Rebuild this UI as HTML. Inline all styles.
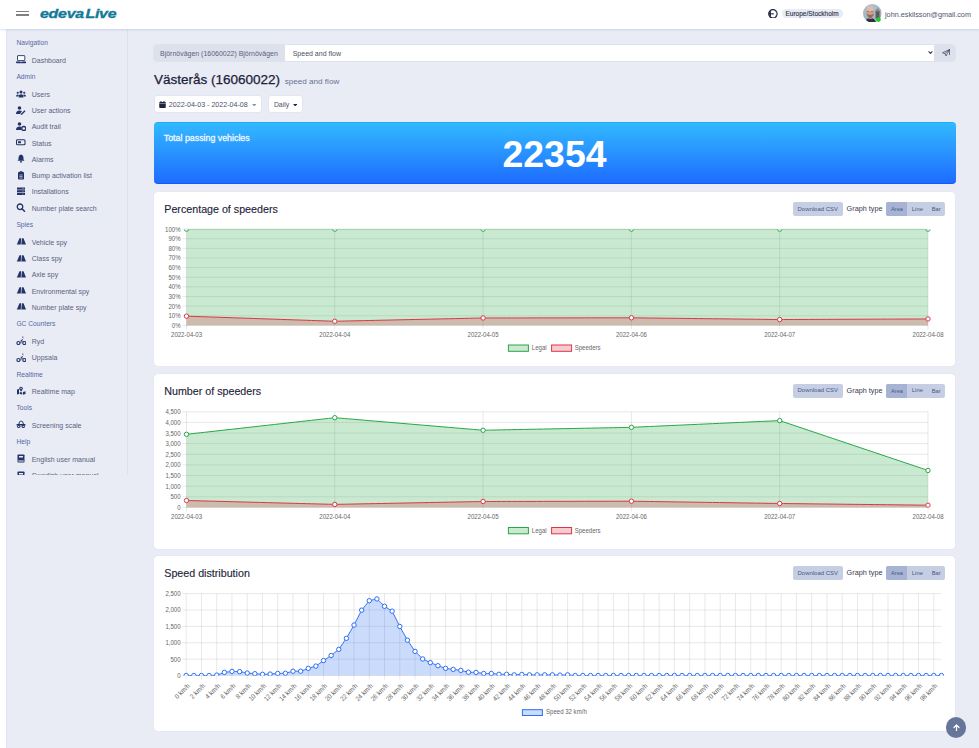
<!DOCTYPE html><html><head><meta charset="utf-8"><style>
*{box-sizing:border-box;margin:0;padding:0}
html,body{width:979px;height:748px;overflow:hidden;background:#e9ecf5;font-family:"Liberation Sans", sans-serif}
.t{position:absolute;white-space:nowrap;line-height:1}
.a{position:absolute}
.card{position:absolute;background:#fff;border-radius:4px;box-shadow:0 0 1px rgba(120,130,170,.25)}
</style></head><body>
<div class="a" style="left:0;top:0;width:979px;height:29px;background:#fff;box-shadow:0 1px 2px rgba(130,150,210,.3);z-index:5"></div>
<div class="a" style="left:0;top:29px;width:6px;height:719px;background:#fff;z-index:4;box-shadow:0.5px 0 1px rgba(190,195,210,.25)"></div>
<div class="a" style="z-index:6;left:16px;top:10.9px;width:13px;height:1.3px;background:#808080"></div>
<div class="a" style="z-index:6;left:16px;top:14.4px;width:13px;height:1.3px;background:#808080"></div>
<div class="t" style="z-index:6;left:39.50px;top:6.86px;font-size:13.4px;color:#137a98;font-weight:bold;font-style:italic;letter-spacing:-0.2px;transform:scaleX(1.19);transform-origin:0 0;-webkit-text-stroke:0.35px #137a98">edeva<span style="margin-left:1.2px">Live</span></div>

<svg class="a" style="z-index:6;left:768px;top:8.5px" width="9.8" height="9.6" viewBox="0 0 20 20"><circle cx="10" cy="10" r="8.8" fill="none" stroke="#1b2035" stroke-width="2.4"/><path d="M2 10 Q2 4 6 3 Q4.5 6 6 8 Q7 9 5 10 Q7 11 6 13 Q4.5 15 6 17 Q2 15 2 10Z" fill="#1b2035"/><path d="M4 10 H10.5" stroke="#1b2035" stroke-width="2"/><circle cx="10.5" cy="10" r="1.4" fill="#1b2035"/><circle cx="16.5" cy="15" r="1.3" fill="#1b2035"/><circle cx="16" cy="5.5" r="1" fill="#1b2035"/></svg>
<div class="a" style="z-index:6;left:781.5px;top:9px;width:61.5px;height:9px;border-radius:5px;background:#e8ebf4"></div>
<div class="t" style="z-index:6;left:785.50px;top:11.00px;font-size:6.5px;color:#262b3f;font-weight:normal;-webkit-text-stroke:0.1px #262b3f">Europe/Stockholm</div>

<svg class="a" style="z-index:6;left:863.2px;top:3.9px" width="18.6" height="18.6" viewBox="0 0 37 37">
<defs><clipPath id="av"><circle cx="18.5" cy="18.5" r="18.5"/></clipPath><radialGradient id="bgav" cx="0.4" cy="0.3" r="0.8"><stop offset="0" stop-color="#b7c9d6"/><stop offset="1" stop-color="#8ea7ba"/></radialGradient></defs>
<g clip-path="url(#av)">
<rect width="37" height="37" fill="url(#bgav)"/>
<rect x="25" y="13" width="8" height="16" fill="#5e5a58"/>
<rect x="27" y="9" width="4" height="6" fill="#7c8a93"/>
<path d="M4 37 Q6 28 14.5 28 Q23 28 26 37Z" fill="#2d2f3a"/>
<rect x="11" y="24" width="7" height="6" fill="#a87f6c"/>
<ellipse cx="14.5" cy="15" rx="8.2" ry="11.5" fill="#caa08c"/>
<ellipse cx="14.5" cy="9.5" rx="7" ry="6" fill="#ddbcad"/>
<path d="M7 19 Q9 27 14.5 27 Q20 27 22 19 Q18 22 14.5 22 Q11 22 7 19Z" fill="#8d6b5c"/>
<rect x="9" y="14" width="3.5" height="1.2" fill="#6e5148"/><rect x="16" y="14" width="3.5" height="1.2" fill="#6e5148"/>
</g>
<circle cx="30.8" cy="31" r="4.6" fill="#1fc92f"/>
</svg>
<div class="t" style="z-index:6;left:885.00px;top:10.75px;font-size:7.26px;color:#50566c;font-weight:normal;">john.eskilsson@gmail.com</div>

<div class="a" style="left:127px;top:29px;width:1px;height:445.5px;background:#dde1ec"></div>
<div class="a" style="left:0;top:29px;width:127px;height:445.5px;overflow:hidden"><div class="a" style="left:0;top:-29px;width:127px;height:520px"><div class="t" style="left:16.40px;top:40.23px;font-size:6.7px;color:#5568a3;font-weight:normal;">Navigation</div>
<svg class="a" style="left:16px;top:55.40px" width="10" height="9" viewBox="0 0 20 18"><rect x="3" y="1.2" width="14.6" height="10" rx="0.8" fill="#fff" stroke="#243468" stroke-width="1.8"/><path d="M0 12.8 H20.6 V15 Q20.6 16.4 19 16.4 H1.6 Q0 16.4 0 15Z" fill="#243468"/><rect x="8" y="13" width="4.6" height="1.2" fill="#dfe6f5"/></svg>
<div class="t" style="left:31.70px;top:56.87px;font-size:7.0px;color:#5a6283;font-weight:normal;">Dashboard</div>
<div class="t" style="left:16.40px;top:74.23px;font-size:6.7px;color:#5568a3;font-weight:normal;">Admin</div>
<svg class="a" style="left:16px;top:89.50px" width="10" height="9" viewBox="0 0 20 18"><circle cx="10" cy="4" r="3" fill="#243468"/><circle cx="3.5" cy="5.5" r="2.2" fill="#243468"/><circle cx="16.5" cy="5.5" r="2.2" fill="#243468"/><path d="M5 15 Q5 8.5 10 8.5 Q15 8.5 15 15Z" fill="#243468"/><path d="M0 13 Q0 9 3.5 9 Q5 9 6 10 Q4 12 4 13Z M20 13 Q20 9 16.5 9 Q15 9 14 10 Q16 12 16 13Z" fill="#243468"/></svg>
<div class="t" style="left:31.70px;top:90.97px;font-size:7.0px;color:#5a6283;font-weight:normal;">Users</div>
<svg class="a" style="left:16px;top:105.70px" width="10" height="9" viewBox="0 0 20 18"><circle cx="7" cy="4" r="3.6" fill="#243468"/><path d="M0 16 Q0 9 7 9 Q10 9 12 10 L8 16Z" fill="#243468"/><path d="M10 15.5 L17 8.5 L19 10.5 L12 17.5 L9.5 17.8Z" fill="#243468"/></svg>
<div class="t" style="left:31.70px;top:107.17px;font-size:7.0px;color:#5a6283;font-weight:normal;">User actions</div>
<svg class="a" style="left:16px;top:122.00px" width="10" height="9" viewBox="0 0 20 18"><circle cx="7" cy="4" r="3.6" fill="#243468"/><path d="M0 16 Q0 9 7 9 Q10 9 11 10 L11 16Z" fill="#243468"/><circle cx="15.5" cy="13" r="4" fill="none" stroke="#243468" stroke-width="2.6"/></svg>
<div class="t" style="left:31.70px;top:123.47px;font-size:7.0px;color:#5a6283;font-weight:normal;">Audit trail</div>
<svg class="a" style="left:16px;top:138.10px" width="10" height="9" viewBox="0 0 20 18"><rect x="1" y="3.5" width="17" height="10" rx="2" fill="none" stroke="#243468" stroke-width="2.2"/><rect x="4" y="6.5" width="6" height="4" fill="#243468"/></svg>
<div class="t" style="left:31.70px;top:139.57px;font-size:7.0px;color:#5a6283;font-weight:normal;">Status</div>
<svg class="a" style="left:16px;top:154.40px" width="10" height="9" viewBox="0 0 20 18"><path d="M10 1 Q15 2 15 8 L15 11 L17 13.5 H3 L5 11 L5 8 Q5 2 10 1Z" fill="#243468"/><circle cx="10" cy="15.5" r="1.8" fill="#243468"/></svg>
<div class="t" style="left:31.70px;top:155.87px;font-size:7.0px;color:#5a6283;font-weight:normal;">Alarms</div>
<svg class="a" style="left:16px;top:170.80px" width="10" height="9" viewBox="0 0 20 18"><rect x="4" y="2" width="12" height="15" rx="1.5" fill="#243468"/><rect x="7" y="0.5" width="6" height="3" rx="1" fill="#243468"/><path d="M7 8 H13 M7 11 H13 M7 14 H13" stroke="#e9ecf5" stroke-width="1.3"/></svg>
<div class="t" style="left:31.70px;top:172.27px;font-size:7.0px;color:#5a6283;font-weight:normal;">Bump activation list</div>
<svg class="a" style="left:16px;top:186.90px" width="10" height="9" viewBox="0 0 20 18"><rect x="2" y="1" width="16" height="4.2" fill="#243468"/><rect x="2" y="6.4" width="16" height="4.2" fill="#243468"/><rect x="2" y="11.8" width="16" height="4.2" fill="#243468"/><path d="M14 2.2 V4 M14 7.6 V9.4 M14 13 V14.8" stroke="#e9ecf5" stroke-width="1.2"/></svg>
<div class="t" style="left:31.70px;top:188.37px;font-size:7.0px;color:#5a6283;font-weight:normal;">Installations</div>
<svg class="a" style="left:16px;top:203.20px" width="10" height="9" viewBox="0 0 20 18"><circle cx="8" cy="7.5" r="5.5" fill="none" stroke="#243468" stroke-width="2.6"/><path d="M12 11.5 L17 16.5" stroke="#243468" stroke-width="3" stroke-linecap="round"/></svg>
<div class="t" style="left:31.70px;top:204.67px;font-size:7.0px;color:#5a6283;font-weight:normal;">Number plate search</div>
<div class="t" style="left:16.40px;top:222.23px;font-size:6.7px;color:#5568a3;font-weight:normal;">Spies</div>
<svg class="a" style="left:16px;top:237.40px" width="10" height="9" viewBox="0 0 20 18"><path d="M7 2.4 H10.2 L9.6 14.8 H1.6Z M11.8 2.4 H15 L20 14.8 H10.6Z" fill="#243468"/></svg>
<div class="t" style="left:31.70px;top:238.87px;font-size:7.0px;color:#5a6283;font-weight:normal;">Vehicle spy</div>
<svg class="a" style="left:16px;top:253.90px" width="10" height="9" viewBox="0 0 20 18"><path d="M7 2.4 H10.2 L9.6 14.8 H1.6Z M11.8 2.4 H15 L20 14.8 H10.6Z" fill="#243468"/></svg>
<div class="t" style="left:31.70px;top:255.37px;font-size:7.0px;color:#5a6283;font-weight:normal;">Class spy</div>
<svg class="a" style="left:16px;top:269.90px" width="10" height="9" viewBox="0 0 20 18"><path d="M7 2.4 H10.2 L9.6 14.8 H1.6Z M11.8 2.4 H15 L20 14.8 H10.6Z" fill="#243468"/></svg>
<div class="t" style="left:31.70px;top:271.37px;font-size:7.0px;color:#5a6283;font-weight:normal;">Axle spy</div>
<svg class="a" style="left:16px;top:286.20px" width="10" height="9" viewBox="0 0 20 18"><path d="M7 2.4 H10.2 L9.6 14.8 H1.6Z M11.8 2.4 H15 L20 14.8 H10.6Z" fill="#243468"/></svg>
<div class="t" style="left:31.70px;top:287.67px;font-size:7.0px;color:#5a6283;font-weight:normal;">Environmental spy</div>
<svg class="a" style="left:16px;top:302.30px" width="10" height="9" viewBox="0 0 20 18"><path d="M7 2.4 H10.2 L9.6 14.8 H1.6Z M11.8 2.4 H15 L20 14.8 H10.6Z" fill="#243468"/></svg>
<div class="t" style="left:31.70px;top:303.77px;font-size:7.0px;color:#5a6283;font-weight:normal;">Number plate spy</div>
<div class="t" style="left:16.40px;top:321.23px;font-size:6.7px;color:#5568a3;font-weight:normal;">GC Counters</div>
<svg class="a" style="left:16px;top:336.40px" width="10" height="9" viewBox="0 0 20 18"><circle cx="4.8" cy="14" r="3.1" fill="none" stroke="#243468" stroke-width="2.2"/><circle cx="16.6" cy="14" r="3.1" fill="none" stroke="#243468" stroke-width="2.2"/><path d="M9.8 14 L10.5 9 L13.5 6 M10.5 9 L14.5 11" fill="none" stroke="#243468" stroke-width="1.8" stroke-linecap="round"/><circle cx="13.6" cy="2.2" r="1.4" fill="#243468"/></svg>
<div class="t" style="left:31.70px;top:337.87px;font-size:7.0px;color:#5a6283;font-weight:normal;">Ryd</div>
<svg class="a" style="left:16px;top:352.80px" width="10" height="9" viewBox="0 0 20 18"><circle cx="4.8" cy="14" r="3.1" fill="none" stroke="#243468" stroke-width="2.2"/><circle cx="16.6" cy="14" r="3.1" fill="none" stroke="#243468" stroke-width="2.2"/><path d="M9.8 14 L10.5 9 L13.5 6 M10.5 9 L14.5 11" fill="none" stroke="#243468" stroke-width="1.8" stroke-linecap="round"/><circle cx="13.6" cy="2.2" r="1.4" fill="#243468"/></svg>
<div class="t" style="left:31.70px;top:354.27px;font-size:7.0px;color:#5a6283;font-weight:normal;">Uppsala</div>
<div class="t" style="left:16.40px;top:371.73px;font-size:6.7px;color:#5568a3;font-weight:normal;">Realtime</div>
<svg class="a" style="left:16px;top:386.20px" width="10" height="9" viewBox="0 0 20 18"><path d="M2 7 L6 6 V16 L2 17Z M7.5 12 L12.5 13 V17 L7.5 16Z M14 12 L19 10.5 V16 L14 17.5Z" fill="#243468"/><path d="M10 1.6 Q13.6 1.6 13.6 5 Q13.6 7 10 11.5 Q6.4 7 6.4 5 Q6.4 1.6 10 1.6Z" fill="#243468"/><circle cx="10" cy="4.8" r="1.4" fill="#e9ecf5"/></svg>
<div class="t" style="left:31.70px;top:387.67px;font-size:7.0px;color:#5a6283;font-weight:normal;">Realtime map</div>
<div class="t" style="left:16.40px;top:405.23px;font-size:6.7px;color:#5568a3;font-weight:normal;">Tools</div>
<svg class="a" style="left:16px;top:420.20px" width="10" height="9" viewBox="0 0 20 18"><path d="M5.5 9 L7 4 Q7.5 2.5 9 2.5 H11.5 Q13 2.5 13.5 4 L15 9" fill="none" stroke="#243468" stroke-width="2"/><rect x="1" y="8" width="18" height="3.2" rx="1" fill="#243468"/><circle cx="5.5" cy="12.8" r="3.4" fill="#243468"/><circle cx="14.5" cy="12.8" r="3.4" fill="#243468"/><circle cx="5.5" cy="12.8" r="1.3" fill="#e9ecf5"/><circle cx="14.5" cy="12.8" r="1.3" fill="#e9ecf5"/></svg>
<div class="t" style="left:31.70px;top:421.67px;font-size:7.0px;color:#5a6283;font-weight:normal;">Screening scale</div>
<div class="t" style="left:16.40px;top:439.03px;font-size:6.7px;color:#5568a3;font-weight:normal;">Help</div>
<svg class="a" style="left:16px;top:454.20px" width="10" height="9" viewBox="0 0 20 18"><rect x="3" y="1" width="14" height="16" rx="1.5" fill="#243468"/><rect x="6" y="4" width="8" height="3" fill="#e9ecf5"/><rect x="4.5" y="13" width="11" height="2" fill="#e9ecf5"/></svg>
<div class="t" style="left:31.70px;top:455.67px;font-size:7.0px;color:#5a6283;font-weight:normal;">English user manual</div>
<svg class="a" style="left:16px;top:470.60px" width="10" height="9" viewBox="0 0 20 18"><rect x="3" y="1" width="14" height="16" rx="1.5" fill="#243468"/><rect x="6" y="4" width="8" height="3" fill="#e9ecf5"/><rect x="4.5" y="13" width="11" height="2" fill="#e9ecf5"/></svg>
<div class="t" style="left:31.70px;top:472.07px;font-size:7.0px;color:#5a6283;font-weight:normal;">Swedish user manual</div>
</div></div>
<div class="a" style="left:153.2px;top:44px;width:802.6px;height:17.8px;border-radius:3px;background:#fff;border:0.5px solid #dfe3ee;overflow:hidden"><div class="a" style="left:0;top:0;width:131px;height:17.8px;background:#dde1ec"></div><div class="a" style="right:0;top:0;width:20.4px;height:17.8px;background:#dde1ec"></div></div>
<div class="t" style="left:160.00px;top:49.79px;font-size:6.98px;color:#5b6180;font-weight:normal;">Björnövägen (16060022) Björnövägen</div>

<div class="t" style="left:292.70px;top:49.87px;font-size:7.0px;color:#4a4f62;font-weight:normal;">Speed and flow</div>

<svg class="a" style="left:928.3px;top:51px" width="5" height="3.4" viewBox="0 0 10 7"><path d="M1 1 L5 5 L9 1" fill="none" stroke="#2f3650" stroke-width="2.2"/></svg>
<svg class="a" style="left:941.6px;top:48.5px" width="8" height="7.6" viewBox="0 0 16 15"><path d="M15 1 L1 7.5 L6 9 L8 14 Z M15 1 L6 9 M15 1 V12" fill="none" stroke="#2f3650" stroke-width="1.3" stroke-linejoin="round"/></svg>
<div class="t" style="left:154.00px;top:73.07px;font-size:13.5px;color:#1c2138;font-weight:normal;-webkit-text-stroke:0.25px #1c2138">Västerås (16060022)</div>

<div class="t" style="left:284.80px;top:77.94px;font-size:8.1px;color:#6b7190;font-weight:normal;">speed and flow</div>

<div class="a" style="left:153.6px;top:95.3px;width:108.8px;height:17.9px;background:#fff;border-radius:3px;border:1px solid #e2e6f0"></div>
<svg class="a" style="left:159px;top:101px" width="7" height="7" viewBox="0 0 14 14"><rect x="0.5" y="2" width="13" height="12" rx="1.5" fill="#1f2440"/><rect x="3" y="0" width="2" height="3" fill="#1f2440"/><rect x="9" y="0" width="2" height="3" fill="#1f2440"/><rect x="0.5" y="4.5" width="13" height="0.8" fill="#fff"/></svg>
<div class="t" style="left:168.80px;top:101.99px;font-size:7.1px;color:#4b5170;font-weight:normal;">2022-04-03 - 2022-04-08</div>

<svg class="a" style="left:252px;top:103.8px" width="4.4" height="2.6" viewBox="0 0 8 5"><path d="M0 0 H8 L4 5Z" fill="#8a93b5"/></svg>
<div class="a" style="left:267.7px;top:95.3px;width:35.6px;height:17.9px;background:#fff;border-radius:3px;border:1px solid #e2e6f0"></div>
<div class="t" style="left:273.90px;top:101.66px;font-size:6.9px;color:#4b5170;font-weight:normal;">Daily</div>

<svg class="a" style="left:293px;top:103.5px" width="4.4" height="2.6" viewBox="0 0 8 5"><path d="M0 0 H8 L4 5Z" fill="#1f2440"/></svg>
<div class="a" style="left:153.5px;top:121.9px;width:802px;height:62px;border-radius:4px;background:linear-gradient(#32b9ff,#1e6cff);border-top:1px solid #12b0ff;border-bottom:1px solid #0d5cff"></div>
<div class="t" style="left:163.80px;top:133.62px;font-size:8.84px;color:#f0f7ff;font-weight:normal;-webkit-text-stroke:0.3px #f0f7ff">Total passing vehicles</div>

<div class="t" style="left:554.50px;transform:translateX(-50%);top:136.24px;font-size:37.4px;color:#fff;font-weight:bold;">22354</div>

<div class="card" style="left:154px;top:192.0px;width:801.2px;height:173.5px"></div>
<div class="card" style="left:154px;top:373.9px;width:801.2px;height:175.1px"></div>
<div class="card" style="left:154px;top:556.1px;width:801.2px;height:174.7px"></div>
<div class="t" style="left:164.30px;top:204.24px;font-size:10.7px;color:#1d2239;font-weight:normal;-webkit-text-stroke:0.12px #1d2239">Percentage of speeders</div>

<div class="t" style="left:164.30px;top:386.24px;font-size:10.7px;color:#1d2239;font-weight:normal;-webkit-text-stroke:0.12px #1d2239">Number of speeders</div>

<div class="t" style="left:164.30px;top:568.34px;font-size:10.7px;color:#1d2239;font-weight:normal;-webkit-text-stroke:0.12px #1d2239">Speed distribution</div>

<div class="a" style="left:792.8px;top:201.6px;width:50px;height:14.2px;border-radius:2px;background:#c6cee3"></div>
<div class="t" style="left:797.50px;top:206.55px;font-size:5.97px;color:#4a5883;font-weight:normal;">Download CSV</div>

<div class="t" style="left:846.60px;top:205.04px;font-size:7.28px;color:#363b52;font-weight:normal;">Graph type</div>

<div class="a" style="left:886.2px;top:201.6px;width:58.5px;height:14.2px;border-radius:2px;background:#c6cee3;overflow:hidden"><div class="a" style="left:0;top:0;width:21.2px;height:14.2px;background:#a6b3d5"></div></div>
<div class="t" style="left:891.00px;top:206.79px;font-size:5.68px;color:#4a5883;font-weight:normal;">Area</div>

<div class="t" style="left:911.80px;top:206.59px;font-size:5.92px;color:#4a5883;font-weight:normal;">Line</div>

<div class="t" style="left:931.70px;top:206.71px;font-size:5.78px;color:#4a5883;font-weight:normal;">Bar</div>

<div class="a" style="left:792.8px;top:383.5px;width:50px;height:14.2px;border-radius:2px;background:#c6cee3"></div>
<div class="t" style="left:797.50px;top:388.45px;font-size:5.97px;color:#4a5883;font-weight:normal;">Download CSV</div>

<div class="t" style="left:846.60px;top:386.94px;font-size:7.28px;color:#363b52;font-weight:normal;">Graph type</div>

<div class="a" style="left:886.2px;top:383.5px;width:58.5px;height:14.2px;border-radius:2px;background:#c6cee3;overflow:hidden"><div class="a" style="left:0;top:0;width:21.2px;height:14.2px;background:#a6b3d5"></div></div>
<div class="t" style="left:891.00px;top:388.69px;font-size:5.68px;color:#4a5883;font-weight:normal;">Area</div>

<div class="t" style="left:911.80px;top:388.49px;font-size:5.92px;color:#4a5883;font-weight:normal;">Line</div>

<div class="t" style="left:931.70px;top:388.61px;font-size:5.78px;color:#4a5883;font-weight:normal;">Bar</div>

<div class="a" style="left:792.8px;top:565.7px;width:50px;height:14.2px;border-radius:2px;background:#c6cee3"></div>
<div class="t" style="left:797.50px;top:570.65px;font-size:5.97px;color:#4a5883;font-weight:normal;">Download CSV</div>

<div class="t" style="left:846.60px;top:569.14px;font-size:7.28px;color:#363b52;font-weight:normal;">Graph type</div>

<div class="a" style="left:886.2px;top:565.7px;width:58.5px;height:14.2px;border-radius:2px;background:#c6cee3;overflow:hidden"><div class="a" style="left:0;top:0;width:21.2px;height:14.2px;background:#a6b3d5"></div></div>
<div class="t" style="left:891.00px;top:570.89px;font-size:5.68px;color:#4a5883;font-weight:normal;">Area</div>

<div class="t" style="left:911.80px;top:570.69px;font-size:5.92px;color:#4a5883;font-weight:normal;">Line</div>

<div class="t" style="left:931.70px;top:570.81px;font-size:5.78px;color:#4a5883;font-weight:normal;">Bar</div>

<svg class="a" style="left:0;top:0" width="979" height="748" viewBox="0 0 979 748"><line x1="182.50" y1="325.40" x2="928.00" y2="325.40" stroke="rgba(0,0,0,0.09)" stroke-width="1"/><line x1="182.50" y1="315.77" x2="928.00" y2="315.77" stroke="rgba(0,0,0,0.09)" stroke-width="1"/><line x1="182.50" y1="306.14" x2="928.00" y2="306.14" stroke="rgba(0,0,0,0.09)" stroke-width="1"/><line x1="182.50" y1="296.51" x2="928.00" y2="296.51" stroke="rgba(0,0,0,0.09)" stroke-width="1"/><line x1="182.50" y1="286.88" x2="928.00" y2="286.88" stroke="rgba(0,0,0,0.09)" stroke-width="1"/><line x1="182.50" y1="277.25" x2="928.00" y2="277.25" stroke="rgba(0,0,0,0.09)" stroke-width="1"/><line x1="182.50" y1="267.62" x2="928.00" y2="267.62" stroke="rgba(0,0,0,0.09)" stroke-width="1"/><line x1="182.50" y1="257.99" x2="928.00" y2="257.99" stroke="rgba(0,0,0,0.09)" stroke-width="1"/><line x1="182.50" y1="248.36" x2="928.00" y2="248.36" stroke="rgba(0,0,0,0.09)" stroke-width="1"/><line x1="182.50" y1="238.73" x2="928.00" y2="238.73" stroke="rgba(0,0,0,0.09)" stroke-width="1"/><line x1="182.50" y1="229.10" x2="928.00" y2="229.10" stroke="rgba(0,0,0,0.09)" stroke-width="1"/><line x1="186.50" y1="229.10" x2="186.50" y2="329.40" stroke="rgba(0,0,0,0.09)" stroke-width="1"/><line x1="334.80" y1="229.10" x2="334.80" y2="329.40" stroke="rgba(0,0,0,0.09)" stroke-width="1"/><line x1="483.10" y1="229.10" x2="483.10" y2="329.40" stroke="rgba(0,0,0,0.09)" stroke-width="1"/><line x1="631.40" y1="229.10" x2="631.40" y2="329.40" stroke="rgba(0,0,0,0.09)" stroke-width="1"/><line x1="779.70" y1="229.10" x2="779.70" y2="329.40" stroke="rgba(0,0,0,0.09)" stroke-width="1"/><line x1="928.00" y1="229.10" x2="928.00" y2="329.40" stroke="rgba(0,0,0,0.09)" stroke-width="1"/><g font-family="Liberation Sans" font-size="6.9" fill="#666"><text transform="translate(180.60,327.88) scale(0.88,1)" text-anchor="end">0%</text><text transform="translate(180.60,318.25) scale(0.88,1)" text-anchor="end">10%</text><text transform="translate(180.60,308.62) scale(0.88,1)" text-anchor="end">20%</text><text transform="translate(180.60,298.99) scale(0.88,1)" text-anchor="end">30%</text><text transform="translate(180.60,289.36) scale(0.88,1)" text-anchor="end">40%</text><text transform="translate(180.60,279.73) scale(0.88,1)" text-anchor="end">50%</text><text transform="translate(180.60,270.10) scale(0.88,1)" text-anchor="end">60%</text><text transform="translate(180.60,260.47) scale(0.88,1)" text-anchor="end">70%</text><text transform="translate(180.60,250.84) scale(0.88,1)" text-anchor="end">80%</text><text transform="translate(180.60,241.21) scale(0.88,1)" text-anchor="end">90%</text><text transform="translate(180.60,231.58) scale(0.88,1)" text-anchor="end">100%</text></g><clipPath id="c1"><rect x="0" y="229.40" width="979" height="96.30"/></clipPath><g clip-path="url(#c1)"><path d="M186.50,325.40 L186.50,229.10 C186.50,229.10 334.80,229.10 334.80,229.10 C334.80,229.10 483.10,229.10 483.10,229.10 C483.10,229.10 631.40,229.10 631.40,229.10 C631.40,229.10 779.70,229.10 779.70,229.10 C779.70,229.10 928.00,229.10 928.00,229.10 L928.00,325.40Z" fill="#28a745" fill-opacity="0.25"/><path d="M186.50,229.10 C186.50,229.10 334.80,229.10 334.80,229.10 C334.80,229.10 483.10,229.10 483.10,229.10 C483.10,229.10 631.40,229.10 631.40,229.10 C631.40,229.10 779.70,229.10 779.70,229.10 C779.70,229.10 928.00,229.10 928.00,229.10" fill="none" stroke="#28a745" stroke-width="1"/><path d="M186.50,325.40 L186.50,316.16 C186.50,316.16 334.80,321.26 334.80,321.26 C334.80,321.26 483.10,317.98 483.10,317.98 C483.10,317.98 631.40,317.79 631.40,317.79 C631.40,317.79 779.70,319.53 779.70,319.53 C779.70,319.53 928.00,318.95 928.00,318.95 L928.00,325.40Z" fill="#dc3545" fill-opacity="0.25"/><path d="M186.50,316.16 C186.50,316.16 334.80,321.26 334.80,321.26 C334.80,321.26 483.10,317.98 483.10,317.98 C483.10,317.98 631.40,317.79 631.40,317.79 C631.40,317.79 779.70,319.53 779.70,319.53 C779.70,319.53 928.00,318.95 928.00,318.95" fill="none" stroke="#dc3545" stroke-width="1"/><circle cx="186.50" cy="229.10" r="2.2" fill="#fff" stroke="#28a745" stroke-width="1"/><circle cx="334.80" cy="229.10" r="2.2" fill="#fff" stroke="#28a745" stroke-width="1"/><circle cx="483.10" cy="229.10" r="2.2" fill="#fff" stroke="#28a745" stroke-width="1"/><circle cx="631.40" cy="229.10" r="2.2" fill="#fff" stroke="#28a745" stroke-width="1"/><circle cx="779.70" cy="229.10" r="2.2" fill="#fff" stroke="#28a745" stroke-width="1"/><circle cx="928.00" cy="229.10" r="2.2" fill="#fff" stroke="#28a745" stroke-width="1"/><circle cx="186.50" cy="316.16" r="2.2" fill="#fff" stroke="#dc3545" stroke-width="1"/><circle cx="334.80" cy="321.26" r="2.2" fill="#fff" stroke="#dc3545" stroke-width="1"/><circle cx="483.10" cy="317.98" r="2.2" fill="#fff" stroke="#dc3545" stroke-width="1"/><circle cx="631.40" cy="317.79" r="2.2" fill="#fff" stroke="#dc3545" stroke-width="1"/><circle cx="779.70" cy="319.53" r="2.2" fill="#fff" stroke="#dc3545" stroke-width="1"/><circle cx="928.00" cy="318.95" r="2.2" fill="#fff" stroke="#dc3545" stroke-width="1"/></g><g font-family="Liberation Sans" font-size="6.9" fill="#666"><text transform="translate(186.50,336.68) scale(0.88,1)" text-anchor="middle">2022-04-03</text><text transform="translate(334.80,336.68) scale(0.88,1)" text-anchor="middle">2022-04-04</text><text transform="translate(483.10,336.68) scale(0.88,1)" text-anchor="middle">2022-04-05</text><text transform="translate(631.40,336.68) scale(0.88,1)" text-anchor="middle">2022-04-06</text><text transform="translate(779.70,336.68) scale(0.88,1)" text-anchor="middle">2022-04-07</text><text transform="translate(928.00,336.68) scale(0.88,1)" text-anchor="middle">2022-04-08</text></g><line x1="182.50" y1="507.40" x2="928.00" y2="507.40" stroke="rgba(0,0,0,0.09)" stroke-width="1"/><line x1="182.50" y1="496.78" x2="928.00" y2="496.78" stroke="rgba(0,0,0,0.09)" stroke-width="1"/><line x1="182.50" y1="486.16" x2="928.00" y2="486.16" stroke="rgba(0,0,0,0.09)" stroke-width="1"/><line x1="182.50" y1="475.53" x2="928.00" y2="475.53" stroke="rgba(0,0,0,0.09)" stroke-width="1"/><line x1="182.50" y1="464.91" x2="928.00" y2="464.91" stroke="rgba(0,0,0,0.09)" stroke-width="1"/><line x1="182.50" y1="454.29" x2="928.00" y2="454.29" stroke="rgba(0,0,0,0.09)" stroke-width="1"/><line x1="182.50" y1="443.67" x2="928.00" y2="443.67" stroke="rgba(0,0,0,0.09)" stroke-width="1"/><line x1="182.50" y1="433.04" x2="928.00" y2="433.04" stroke="rgba(0,0,0,0.09)" stroke-width="1"/><line x1="182.50" y1="422.42" x2="928.00" y2="422.42" stroke="rgba(0,0,0,0.09)" stroke-width="1"/><line x1="182.50" y1="411.80" x2="928.00" y2="411.80" stroke="rgba(0,0,0,0.09)" stroke-width="1"/><line x1="186.50" y1="411.80" x2="186.50" y2="511.40" stroke="rgba(0,0,0,0.09)" stroke-width="1"/><line x1="334.80" y1="411.80" x2="334.80" y2="511.40" stroke="rgba(0,0,0,0.09)" stroke-width="1"/><line x1="483.10" y1="411.80" x2="483.10" y2="511.40" stroke="rgba(0,0,0,0.09)" stroke-width="1"/><line x1="631.40" y1="411.80" x2="631.40" y2="511.40" stroke="rgba(0,0,0,0.09)" stroke-width="1"/><line x1="779.70" y1="411.80" x2="779.70" y2="511.40" stroke="rgba(0,0,0,0.09)" stroke-width="1"/><line x1="928.00" y1="411.80" x2="928.00" y2="511.40" stroke="rgba(0,0,0,0.09)" stroke-width="1"/><g font-family="Liberation Sans" font-size="6.9" fill="#666"><text transform="translate(180.60,509.88) scale(0.88,1)" text-anchor="end">0</text><text transform="translate(180.60,499.26) scale(0.88,1)" text-anchor="end">500</text><text transform="translate(180.60,488.64) scale(0.88,1)" text-anchor="end">1,000</text><text transform="translate(180.60,478.02) scale(0.88,1)" text-anchor="end">1,500</text><text transform="translate(180.60,467.40) scale(0.88,1)" text-anchor="end">2,000</text><text transform="translate(180.60,456.77) scale(0.88,1)" text-anchor="end">2,500</text><text transform="translate(180.60,446.15) scale(0.88,1)" text-anchor="end">3,000</text><text transform="translate(180.60,435.53) scale(0.88,1)" text-anchor="end">3,500</text><text transform="translate(180.60,424.91) scale(0.88,1)" text-anchor="end">4,000</text><text transform="translate(180.60,414.28) scale(0.88,1)" text-anchor="end">4,500</text></g><clipPath id="c2"><rect x="0" y="412.10" width="979" height="95.60"/></clipPath><g clip-path="url(#c2)"><path d="M186.50,507.40 L186.50,434.32 C186.50,434.32 334.80,417.71 334.80,417.71 C334.80,417.71 483.10,430.24 483.10,430.24 C483.10,430.24 631.40,427.33 631.40,427.33 C631.40,427.33 779.70,420.62 779.70,420.62 C779.70,420.62 928.00,470.43 928.00,470.43 L928.00,507.40Z" fill="#28a745" fill-opacity="0.25"/><path d="M186.50,434.32 C186.50,434.32 334.80,417.71 334.80,417.71 C334.80,417.71 483.10,430.24 483.10,430.24 C483.10,430.24 631.40,427.33 631.40,427.33 C631.40,427.33 779.70,420.62 779.70,420.62 C779.70,420.62 928.00,470.43 928.00,470.43" fill="none" stroke="#28a745" stroke-width="1"/><path d="M186.50,507.40 L186.50,500.50 C186.50,500.50 334.80,504.40 334.80,504.40 C334.80,504.40 483.10,501.49 483.10,501.49 C483.10,501.49 631.40,501.20 631.40,501.20 C631.40,501.20 779.70,503.49 779.70,503.49 C779.70,503.49 928.00,505.19 928.00,505.19 L928.00,507.40Z" fill="#dc3545" fill-opacity="0.25"/><path d="M186.50,500.50 C186.50,500.50 334.80,504.40 334.80,504.40 C334.80,504.40 483.10,501.49 483.10,501.49 C483.10,501.49 631.40,501.20 631.40,501.20 C631.40,501.20 779.70,503.49 779.70,503.49 C779.70,503.49 928.00,505.19 928.00,505.19" fill="none" stroke="#dc3545" stroke-width="1"/><circle cx="186.50" cy="434.32" r="2.2" fill="#fff" stroke="#28a745" stroke-width="1"/><circle cx="334.80" cy="417.71" r="2.2" fill="#fff" stroke="#28a745" stroke-width="1"/><circle cx="483.10" cy="430.24" r="2.2" fill="#fff" stroke="#28a745" stroke-width="1"/><circle cx="631.40" cy="427.33" r="2.2" fill="#fff" stroke="#28a745" stroke-width="1"/><circle cx="779.70" cy="420.62" r="2.2" fill="#fff" stroke="#28a745" stroke-width="1"/><circle cx="928.00" cy="470.43" r="2.2" fill="#fff" stroke="#28a745" stroke-width="1"/><circle cx="186.50" cy="500.50" r="2.2" fill="#fff" stroke="#dc3545" stroke-width="1"/><circle cx="334.80" cy="504.40" r="2.2" fill="#fff" stroke="#dc3545" stroke-width="1"/><circle cx="483.10" cy="501.49" r="2.2" fill="#fff" stroke="#dc3545" stroke-width="1"/><circle cx="631.40" cy="501.20" r="2.2" fill="#fff" stroke="#dc3545" stroke-width="1"/><circle cx="779.70" cy="503.49" r="2.2" fill="#fff" stroke="#dc3545" stroke-width="1"/><circle cx="928.00" cy="505.19" r="2.2" fill="#fff" stroke="#dc3545" stroke-width="1"/></g><g font-family="Liberation Sans" font-size="6.9" fill="#666"><text transform="translate(186.50,518.98) scale(0.88,1)" text-anchor="middle">2022-04-03</text><text transform="translate(334.80,518.98) scale(0.88,1)" text-anchor="middle">2022-04-04</text><text transform="translate(483.10,518.98) scale(0.88,1)" text-anchor="middle">2022-04-05</text><text transform="translate(631.40,518.98) scale(0.88,1)" text-anchor="middle">2022-04-06</text><text transform="translate(779.70,518.98) scale(0.88,1)" text-anchor="middle">2022-04-07</text><text transform="translate(928.00,518.98) scale(0.88,1)" text-anchor="middle">2022-04-08</text></g><rect x="508.4" y="345.00" width="20" height="6.3" fill="#28a745" fill-opacity="0.25" stroke="#28a745" stroke-width="1"/><rect x="551.6" y="345.00" width="20" height="6.3" fill="#dc3545" fill-opacity="0.25" stroke="#dc3545" stroke-width="1"/><g font-family="Liberation Sans" font-size="6.9" fill="#666"><text transform="translate(531.80,350.18) scale(0.88,1)">Legal</text><text transform="translate(574.70,350.18) scale(0.88,1)">Speeders</text></g><rect x="508.4" y="527.50" width="20" height="6.3" fill="#28a745" fill-opacity="0.25" stroke="#28a745" stroke-width="1"/><rect x="551.6" y="527.50" width="20" height="6.3" fill="#dc3545" fill-opacity="0.25" stroke="#dc3545" stroke-width="1"/><g font-family="Liberation Sans" font-size="6.9" fill="#666"><text transform="translate(531.80,532.68) scale(0.88,1)">Legal</text><text transform="translate(574.70,532.68) scale(0.88,1)">Speeders</text></g><line x1="182.20" y1="675.50" x2="941.40" y2="675.50" stroke="rgba(0,0,0,0.09)" stroke-width="1"/><line x1="182.20" y1="659.12" x2="941.40" y2="659.12" stroke="rgba(0,0,0,0.09)" stroke-width="1"/><line x1="182.20" y1="642.74" x2="941.40" y2="642.74" stroke="rgba(0,0,0,0.09)" stroke-width="1"/><line x1="182.20" y1="626.36" x2="941.40" y2="626.36" stroke="rgba(0,0,0,0.09)" stroke-width="1"/><line x1="182.20" y1="609.98" x2="941.40" y2="609.98" stroke="rgba(0,0,0,0.09)" stroke-width="1"/><line x1="182.20" y1="593.60" x2="941.40" y2="593.60" stroke="rgba(0,0,0,0.09)" stroke-width="1"/><line x1="186.20" y1="593.60" x2="186.20" y2="679.50" stroke="rgba(0,0,0,0.09)" stroke-width="1"/><line x1="201.46" y1="593.60" x2="201.46" y2="679.50" stroke="rgba(0,0,0,0.09)" stroke-width="1"/><line x1="216.71" y1="593.60" x2="216.71" y2="679.50" stroke="rgba(0,0,0,0.09)" stroke-width="1"/><line x1="231.97" y1="593.60" x2="231.97" y2="679.50" stroke="rgba(0,0,0,0.09)" stroke-width="1"/><line x1="247.23" y1="593.60" x2="247.23" y2="679.50" stroke="rgba(0,0,0,0.09)" stroke-width="1"/><line x1="262.48" y1="593.60" x2="262.48" y2="679.50" stroke="rgba(0,0,0,0.09)" stroke-width="1"/><line x1="277.74" y1="593.60" x2="277.74" y2="679.50" stroke="rgba(0,0,0,0.09)" stroke-width="1"/><line x1="293.00" y1="593.60" x2="293.00" y2="679.50" stroke="rgba(0,0,0,0.09)" stroke-width="1"/><line x1="308.25" y1="593.60" x2="308.25" y2="679.50" stroke="rgba(0,0,0,0.09)" stroke-width="1"/><line x1="323.51" y1="593.60" x2="323.51" y2="679.50" stroke="rgba(0,0,0,0.09)" stroke-width="1"/><line x1="338.77" y1="593.60" x2="338.77" y2="679.50" stroke="rgba(0,0,0,0.09)" stroke-width="1"/><line x1="354.02" y1="593.60" x2="354.02" y2="679.50" stroke="rgba(0,0,0,0.09)" stroke-width="1"/><line x1="369.28" y1="593.60" x2="369.28" y2="679.50" stroke="rgba(0,0,0,0.09)" stroke-width="1"/><line x1="384.54" y1="593.60" x2="384.54" y2="679.50" stroke="rgba(0,0,0,0.09)" stroke-width="1"/><line x1="399.79" y1="593.60" x2="399.79" y2="679.50" stroke="rgba(0,0,0,0.09)" stroke-width="1"/><line x1="415.05" y1="593.60" x2="415.05" y2="679.50" stroke="rgba(0,0,0,0.09)" stroke-width="1"/><line x1="430.31" y1="593.60" x2="430.31" y2="679.50" stroke="rgba(0,0,0,0.09)" stroke-width="1"/><line x1="445.56" y1="593.60" x2="445.56" y2="679.50" stroke="rgba(0,0,0,0.09)" stroke-width="1"/><line x1="460.82" y1="593.60" x2="460.82" y2="679.50" stroke="rgba(0,0,0,0.09)" stroke-width="1"/><line x1="476.07" y1="593.60" x2="476.07" y2="679.50" stroke="rgba(0,0,0,0.09)" stroke-width="1"/><line x1="491.33" y1="593.60" x2="491.33" y2="679.50" stroke="rgba(0,0,0,0.09)" stroke-width="1"/><line x1="506.59" y1="593.60" x2="506.59" y2="679.50" stroke="rgba(0,0,0,0.09)" stroke-width="1"/><line x1="521.84" y1="593.60" x2="521.84" y2="679.50" stroke="rgba(0,0,0,0.09)" stroke-width="1"/><line x1="537.10" y1="593.60" x2="537.10" y2="679.50" stroke="rgba(0,0,0,0.09)" stroke-width="1"/><line x1="552.36" y1="593.60" x2="552.36" y2="679.50" stroke="rgba(0,0,0,0.09)" stroke-width="1"/><line x1="567.61" y1="593.60" x2="567.61" y2="679.50" stroke="rgba(0,0,0,0.09)" stroke-width="1"/><line x1="582.87" y1="593.60" x2="582.87" y2="679.50" stroke="rgba(0,0,0,0.09)" stroke-width="1"/><line x1="598.13" y1="593.60" x2="598.13" y2="679.50" stroke="rgba(0,0,0,0.09)" stroke-width="1"/><line x1="613.38" y1="593.60" x2="613.38" y2="679.50" stroke="rgba(0,0,0,0.09)" stroke-width="1"/><line x1="628.64" y1="593.60" x2="628.64" y2="679.50" stroke="rgba(0,0,0,0.09)" stroke-width="1"/><line x1="643.90" y1="593.60" x2="643.90" y2="679.50" stroke="rgba(0,0,0,0.09)" stroke-width="1"/><line x1="659.15" y1="593.60" x2="659.15" y2="679.50" stroke="rgba(0,0,0,0.09)" stroke-width="1"/><line x1="674.41" y1="593.60" x2="674.41" y2="679.50" stroke="rgba(0,0,0,0.09)" stroke-width="1"/><line x1="689.67" y1="593.60" x2="689.67" y2="679.50" stroke="rgba(0,0,0,0.09)" stroke-width="1"/><line x1="704.92" y1="593.60" x2="704.92" y2="679.50" stroke="rgba(0,0,0,0.09)" stroke-width="1"/><line x1="720.18" y1="593.60" x2="720.18" y2="679.50" stroke="rgba(0,0,0,0.09)" stroke-width="1"/><line x1="735.44" y1="593.60" x2="735.44" y2="679.50" stroke="rgba(0,0,0,0.09)" stroke-width="1"/><line x1="750.69" y1="593.60" x2="750.69" y2="679.50" stroke="rgba(0,0,0,0.09)" stroke-width="1"/><line x1="765.95" y1="593.60" x2="765.95" y2="679.50" stroke="rgba(0,0,0,0.09)" stroke-width="1"/><line x1="781.21" y1="593.60" x2="781.21" y2="679.50" stroke="rgba(0,0,0,0.09)" stroke-width="1"/><line x1="796.46" y1="593.60" x2="796.46" y2="679.50" stroke="rgba(0,0,0,0.09)" stroke-width="1"/><line x1="811.72" y1="593.60" x2="811.72" y2="679.50" stroke="rgba(0,0,0,0.09)" stroke-width="1"/><line x1="826.98" y1="593.60" x2="826.98" y2="679.50" stroke="rgba(0,0,0,0.09)" stroke-width="1"/><line x1="842.23" y1="593.60" x2="842.23" y2="679.50" stroke="rgba(0,0,0,0.09)" stroke-width="1"/><line x1="857.49" y1="593.60" x2="857.49" y2="679.50" stroke="rgba(0,0,0,0.09)" stroke-width="1"/><line x1="872.75" y1="593.60" x2="872.75" y2="679.50" stroke="rgba(0,0,0,0.09)" stroke-width="1"/><line x1="888.00" y1="593.60" x2="888.00" y2="679.50" stroke="rgba(0,0,0,0.09)" stroke-width="1"/><line x1="903.26" y1="593.60" x2="903.26" y2="679.50" stroke="rgba(0,0,0,0.09)" stroke-width="1"/><line x1="918.52" y1="593.60" x2="918.52" y2="679.50" stroke="rgba(0,0,0,0.09)" stroke-width="1"/><line x1="933.77" y1="593.60" x2="933.77" y2="679.50" stroke="rgba(0,0,0,0.09)" stroke-width="1"/><g font-family="Liberation Sans" font-size="6.9" fill="#666"><text transform="translate(180.60,677.98) scale(0.88,1)" text-anchor="end">0</text><text transform="translate(180.60,661.60) scale(0.88,1)" text-anchor="end">500</text><text transform="translate(180.60,645.22) scale(0.88,1)" text-anchor="end">1,000</text><text transform="translate(180.60,628.84) scale(0.88,1)" text-anchor="end">1,500</text><text transform="translate(180.60,612.46) scale(0.88,1)" text-anchor="end">2,000</text><text transform="translate(180.60,596.08) scale(0.88,1)" text-anchor="end">2,500</text></g><clipPath id="c3"><rect x="0" y="593.90" width="979" height="81.90"/></clipPath><g clip-path="url(#c3)"><path d="M186.20,675.50 L186.20,675.50 C186.20,675.50 193.83,675.50 193.83,675.50 C193.83,675.50 201.46,675.50 201.46,675.50 C201.46,675.50 209.08,675.50 209.08,675.50 C209.08,675.50 216.71,675.11 216.71,675.11 C216.71,675.11 224.34,672.42 224.34,672.42 C224.34,672.42 231.97,671.40 231.97,671.40 C231.97,671.40 239.60,671.63 239.60,671.63 C239.60,671.63 247.23,673.04 247.23,673.04 C247.23,673.04 254.85,673.67 254.85,673.67 C254.85,673.67 262.48,674.29 262.48,674.29 C262.48,674.29 270.11,674.06 270.11,674.06 C270.11,674.06 277.74,673.47 277.74,673.47 C277.74,673.47 285.37,673.24 285.37,673.24 C285.37,673.24 293.00,671.21 293.00,671.21 C293.00,671.21 300.62,671.21 300.62,671.21 C300.62,671.21 308.25,668.36 308.25,668.36 C308.25,668.36 315.88,666.10 315.88,666.10 C315.88,666.10 323.51,660.59 323.51,660.59 C323.51,660.59 331.14,655.48 331.14,655.48 C331.14,655.48 338.77,649.36 338.77,649.36 C338.77,649.36 346.39,638.32 346.39,638.32 C346.39,638.32 354.02,625.05 354.02,625.05 C354.02,625.05 361.65,610.14 361.65,610.14 C361.65,610.14 369.28,600.74 369.28,600.74 C369.28,600.74 376.91,598.91 376.91,598.91 C376.91,598.91 384.54,606.28 384.54,606.28 C384.54,606.28 392.16,611.16 392.16,611.16 C392.16,611.16 399.79,626.49 399.79,626.49 C399.79,626.49 407.42,640.18 407.42,640.18 C407.42,640.18 415.05,651.39 415.05,651.39 C415.05,651.39 422.68,658.96 422.68,658.96 C422.68,658.96 430.31,662.63 430.31,662.63 C430.31,662.63 437.93,665.70 437.93,665.70 C437.93,665.70 445.56,668.36 445.56,668.36 C445.56,668.36 453.19,669.37 453.19,669.37 C453.19,669.37 460.82,670.39 460.82,670.39 C460.82,670.39 468.45,672.22 468.45,672.22 C468.45,672.22 476.07,672.42 476.07,672.42 C476.07,672.42 483.70,673.47 483.70,673.47 C483.70,673.47 491.33,673.47 491.33,673.47 C491.33,673.47 498.96,674.29 498.96,674.29 C498.96,674.29 506.59,674.29 506.59,674.29 C506.59,674.29 514.22,674.88 514.22,674.88 C514.22,674.88 521.84,674.48 521.84,674.48 C521.84,674.48 529.47,674.88 529.47,674.88 C529.47,674.88 537.10,674.88 537.10,674.88 C537.10,674.88 544.73,674.88 544.73,674.88 C544.73,674.88 552.36,674.88 552.36,674.88 C552.36,674.88 559.99,675.11 559.99,675.11 C559.99,675.11 567.61,674.88 567.61,674.88 C567.61,674.88 575.24,675.50 575.24,675.50 C575.24,675.50 582.87,675.50 582.87,675.50 C582.87,675.50 590.50,675.50 590.50,675.50 C590.50,675.50 598.13,675.50 598.13,675.50 C598.13,675.50 605.76,675.50 605.76,675.50 C605.76,675.50 613.38,675.50 613.38,675.50 C613.38,675.50 621.01,675.50 621.01,675.50 C621.01,675.50 628.64,675.50 628.64,675.50 C628.64,675.50 636.27,675.50 636.27,675.50 C636.27,675.50 643.90,675.50 643.90,675.50 C643.90,675.50 651.53,675.50 651.53,675.50 C651.53,675.50 659.15,675.50 659.15,675.50 C659.15,675.50 666.78,675.50 666.78,675.50 C666.78,675.50 674.41,675.50 674.41,675.50 C674.41,675.50 682.04,675.50 682.04,675.50 C682.04,675.50 689.67,675.50 689.67,675.50 C689.67,675.50 697.29,675.50 697.29,675.50 C697.29,675.50 704.92,675.50 704.92,675.50 C704.92,675.50 712.55,675.50 712.55,675.50 C712.55,675.50 720.18,675.50 720.18,675.50 C720.18,675.50 727.81,675.50 727.81,675.50 C727.81,675.50 735.44,675.50 735.44,675.50 C735.44,675.50 743.06,675.50 743.06,675.50 C743.06,675.50 750.69,675.50 750.69,675.50 C750.69,675.50 758.32,675.50 758.32,675.50 C758.32,675.50 765.95,675.50 765.95,675.50 C765.95,675.50 773.58,675.50 773.58,675.50 C773.58,675.50 781.21,675.50 781.21,675.50 C781.21,675.50 788.83,675.50 788.83,675.50 C788.83,675.50 796.46,675.50 796.46,675.50 C796.46,675.50 804.09,675.50 804.09,675.50 C804.09,675.50 811.72,675.50 811.72,675.50 C811.72,675.50 819.35,675.50 819.35,675.50 C819.35,675.50 826.98,675.50 826.98,675.50 C826.98,675.50 834.60,675.50 834.60,675.50 C834.60,675.50 842.23,675.50 842.23,675.50 C842.23,675.50 849.86,675.50 849.86,675.50 C849.86,675.50 857.49,675.50 857.49,675.50 C857.49,675.50 865.12,675.50 865.12,675.50 C865.12,675.50 872.75,675.50 872.75,675.50 C872.75,675.50 880.37,675.50 880.37,675.50 C880.37,675.50 888.00,675.50 888.00,675.50 C888.00,675.50 895.63,675.50 895.63,675.50 C895.63,675.50 903.26,675.50 903.26,675.50 C903.26,675.50 910.89,675.50 910.89,675.50 C910.89,675.50 918.52,675.50 918.52,675.50 C918.52,675.50 926.14,675.50 926.14,675.50 C926.14,675.50 933.77,675.50 933.77,675.50 C933.77,675.50 941.40,675.50 941.40,675.50 L941.40,675.50Z" fill="#2d6ef5" fill-opacity="0.25"/><path d="M186.20,675.50 C186.20,675.50 193.83,675.50 193.83,675.50 C193.83,675.50 201.46,675.50 201.46,675.50 C201.46,675.50 209.08,675.50 209.08,675.50 C209.08,675.50 216.71,675.11 216.71,675.11 C216.71,675.11 224.34,672.42 224.34,672.42 C224.34,672.42 231.97,671.40 231.97,671.40 C231.97,671.40 239.60,671.63 239.60,671.63 C239.60,671.63 247.23,673.04 247.23,673.04 C247.23,673.04 254.85,673.67 254.85,673.67 C254.85,673.67 262.48,674.29 262.48,674.29 C262.48,674.29 270.11,674.06 270.11,674.06 C270.11,674.06 277.74,673.47 277.74,673.47 C277.74,673.47 285.37,673.24 285.37,673.24 C285.37,673.24 293.00,671.21 293.00,671.21 C293.00,671.21 300.62,671.21 300.62,671.21 C300.62,671.21 308.25,668.36 308.25,668.36 C308.25,668.36 315.88,666.10 315.88,666.10 C315.88,666.10 323.51,660.59 323.51,660.59 C323.51,660.59 331.14,655.48 331.14,655.48 C331.14,655.48 338.77,649.36 338.77,649.36 C338.77,649.36 346.39,638.32 346.39,638.32 C346.39,638.32 354.02,625.05 354.02,625.05 C354.02,625.05 361.65,610.14 361.65,610.14 C361.65,610.14 369.28,600.74 369.28,600.74 C369.28,600.74 376.91,598.91 376.91,598.91 C376.91,598.91 384.54,606.28 384.54,606.28 C384.54,606.28 392.16,611.16 392.16,611.16 C392.16,611.16 399.79,626.49 399.79,626.49 C399.79,626.49 407.42,640.18 407.42,640.18 C407.42,640.18 415.05,651.39 415.05,651.39 C415.05,651.39 422.68,658.96 422.68,658.96 C422.68,658.96 430.31,662.63 430.31,662.63 C430.31,662.63 437.93,665.70 437.93,665.70 C437.93,665.70 445.56,668.36 445.56,668.36 C445.56,668.36 453.19,669.37 453.19,669.37 C453.19,669.37 460.82,670.39 460.82,670.39 C460.82,670.39 468.45,672.22 468.45,672.22 C468.45,672.22 476.07,672.42 476.07,672.42 C476.07,672.42 483.70,673.47 483.70,673.47 C483.70,673.47 491.33,673.47 491.33,673.47 C491.33,673.47 498.96,674.29 498.96,674.29 C498.96,674.29 506.59,674.29 506.59,674.29 C506.59,674.29 514.22,674.88 514.22,674.88 C514.22,674.88 521.84,674.48 521.84,674.48 C521.84,674.48 529.47,674.88 529.47,674.88 C529.47,674.88 537.10,674.88 537.10,674.88 C537.10,674.88 544.73,674.88 544.73,674.88 C544.73,674.88 552.36,674.88 552.36,674.88 C552.36,674.88 559.99,675.11 559.99,675.11 C559.99,675.11 567.61,674.88 567.61,674.88 C567.61,674.88 575.24,675.50 575.24,675.50 C575.24,675.50 582.87,675.50 582.87,675.50 C582.87,675.50 590.50,675.50 590.50,675.50 C590.50,675.50 598.13,675.50 598.13,675.50 C598.13,675.50 605.76,675.50 605.76,675.50 C605.76,675.50 613.38,675.50 613.38,675.50 C613.38,675.50 621.01,675.50 621.01,675.50 C621.01,675.50 628.64,675.50 628.64,675.50 C628.64,675.50 636.27,675.50 636.27,675.50 C636.27,675.50 643.90,675.50 643.90,675.50 C643.90,675.50 651.53,675.50 651.53,675.50 C651.53,675.50 659.15,675.50 659.15,675.50 C659.15,675.50 666.78,675.50 666.78,675.50 C666.78,675.50 674.41,675.50 674.41,675.50 C674.41,675.50 682.04,675.50 682.04,675.50 C682.04,675.50 689.67,675.50 689.67,675.50 C689.67,675.50 697.29,675.50 697.29,675.50 C697.29,675.50 704.92,675.50 704.92,675.50 C704.92,675.50 712.55,675.50 712.55,675.50 C712.55,675.50 720.18,675.50 720.18,675.50 C720.18,675.50 727.81,675.50 727.81,675.50 C727.81,675.50 735.44,675.50 735.44,675.50 C735.44,675.50 743.06,675.50 743.06,675.50 C743.06,675.50 750.69,675.50 750.69,675.50 C750.69,675.50 758.32,675.50 758.32,675.50 C758.32,675.50 765.95,675.50 765.95,675.50 C765.95,675.50 773.58,675.50 773.58,675.50 C773.58,675.50 781.21,675.50 781.21,675.50 C781.21,675.50 788.83,675.50 788.83,675.50 C788.83,675.50 796.46,675.50 796.46,675.50 C796.46,675.50 804.09,675.50 804.09,675.50 C804.09,675.50 811.72,675.50 811.72,675.50 C811.72,675.50 819.35,675.50 819.35,675.50 C819.35,675.50 826.98,675.50 826.98,675.50 C826.98,675.50 834.60,675.50 834.60,675.50 C834.60,675.50 842.23,675.50 842.23,675.50 C842.23,675.50 849.86,675.50 849.86,675.50 C849.86,675.50 857.49,675.50 857.49,675.50 C857.49,675.50 865.12,675.50 865.12,675.50 C865.12,675.50 872.75,675.50 872.75,675.50 C872.75,675.50 880.37,675.50 880.37,675.50 C880.37,675.50 888.00,675.50 888.00,675.50 C888.00,675.50 895.63,675.50 895.63,675.50 C895.63,675.50 903.26,675.50 903.26,675.50 C903.26,675.50 910.89,675.50 910.89,675.50 C910.89,675.50 918.52,675.50 918.52,675.50 C918.52,675.50 926.14,675.50 926.14,675.50 C926.14,675.50 933.77,675.50 933.77,675.50 C933.77,675.50 941.40,675.50 941.40,675.50" fill="none" stroke="#2d6ef5" stroke-width="1"/><circle cx="186.20" cy="675.50" r="2.2" fill="#fff" stroke="#2d6ef5" stroke-width="1"/><circle cx="193.83" cy="675.50" r="2.2" fill="#fff" stroke="#2d6ef5" stroke-width="1"/><circle cx="201.46" cy="675.50" r="2.2" fill="#fff" stroke="#2d6ef5" stroke-width="1"/><circle cx="209.08" cy="675.50" r="2.2" fill="#fff" stroke="#2d6ef5" stroke-width="1"/><circle cx="216.71" cy="675.11" r="2.2" fill="#fff" stroke="#2d6ef5" stroke-width="1"/><circle cx="224.34" cy="672.42" r="2.2" fill="#fff" stroke="#2d6ef5" stroke-width="1"/><circle cx="231.97" cy="671.40" r="2.2" fill="#fff" stroke="#2d6ef5" stroke-width="1"/><circle cx="239.60" cy="671.63" r="2.2" fill="#fff" stroke="#2d6ef5" stroke-width="1"/><circle cx="247.23" cy="673.04" r="2.2" fill="#fff" stroke="#2d6ef5" stroke-width="1"/><circle cx="254.85" cy="673.67" r="2.2" fill="#fff" stroke="#2d6ef5" stroke-width="1"/><circle cx="262.48" cy="674.29" r="2.2" fill="#fff" stroke="#2d6ef5" stroke-width="1"/><circle cx="270.11" cy="674.06" r="2.2" fill="#fff" stroke="#2d6ef5" stroke-width="1"/><circle cx="277.74" cy="673.47" r="2.2" fill="#fff" stroke="#2d6ef5" stroke-width="1"/><circle cx="285.37" cy="673.24" r="2.2" fill="#fff" stroke="#2d6ef5" stroke-width="1"/><circle cx="293.00" cy="671.21" r="2.2" fill="#fff" stroke="#2d6ef5" stroke-width="1"/><circle cx="300.62" cy="671.21" r="2.2" fill="#fff" stroke="#2d6ef5" stroke-width="1"/><circle cx="308.25" cy="668.36" r="2.2" fill="#fff" stroke="#2d6ef5" stroke-width="1"/><circle cx="315.88" cy="666.10" r="2.2" fill="#fff" stroke="#2d6ef5" stroke-width="1"/><circle cx="323.51" cy="660.59" r="2.2" fill="#fff" stroke="#2d6ef5" stroke-width="1"/><circle cx="331.14" cy="655.48" r="2.2" fill="#fff" stroke="#2d6ef5" stroke-width="1"/><circle cx="338.77" cy="649.36" r="2.2" fill="#fff" stroke="#2d6ef5" stroke-width="1"/><circle cx="346.39" cy="638.32" r="2.2" fill="#fff" stroke="#2d6ef5" stroke-width="1"/><circle cx="354.02" cy="625.05" r="2.2" fill="#fff" stroke="#2d6ef5" stroke-width="1"/><circle cx="361.65" cy="610.14" r="2.2" fill="#fff" stroke="#2d6ef5" stroke-width="1"/><circle cx="369.28" cy="600.74" r="2.2" fill="#fff" stroke="#2d6ef5" stroke-width="1"/><circle cx="376.91" cy="598.91" r="2.2" fill="#fff" stroke="#2d6ef5" stroke-width="1"/><circle cx="384.54" cy="606.28" r="2.2" fill="#fff" stroke="#2d6ef5" stroke-width="1"/><circle cx="392.16" cy="611.16" r="2.2" fill="#fff" stroke="#2d6ef5" stroke-width="1"/><circle cx="399.79" cy="626.49" r="2.2" fill="#fff" stroke="#2d6ef5" stroke-width="1"/><circle cx="407.42" cy="640.18" r="2.2" fill="#fff" stroke="#2d6ef5" stroke-width="1"/><circle cx="415.05" cy="651.39" r="2.2" fill="#fff" stroke="#2d6ef5" stroke-width="1"/><circle cx="422.68" cy="658.96" r="2.2" fill="#fff" stroke="#2d6ef5" stroke-width="1"/><circle cx="430.31" cy="662.63" r="2.2" fill="#fff" stroke="#2d6ef5" stroke-width="1"/><circle cx="437.93" cy="665.70" r="2.2" fill="#fff" stroke="#2d6ef5" stroke-width="1"/><circle cx="445.56" cy="668.36" r="2.2" fill="#fff" stroke="#2d6ef5" stroke-width="1"/><circle cx="453.19" cy="669.37" r="2.2" fill="#fff" stroke="#2d6ef5" stroke-width="1"/><circle cx="460.82" cy="670.39" r="2.2" fill="#fff" stroke="#2d6ef5" stroke-width="1"/><circle cx="468.45" cy="672.22" r="2.2" fill="#fff" stroke="#2d6ef5" stroke-width="1"/><circle cx="476.07" cy="672.42" r="2.2" fill="#fff" stroke="#2d6ef5" stroke-width="1"/><circle cx="483.70" cy="673.47" r="2.2" fill="#fff" stroke="#2d6ef5" stroke-width="1"/><circle cx="491.33" cy="673.47" r="2.2" fill="#fff" stroke="#2d6ef5" stroke-width="1"/><circle cx="498.96" cy="674.29" r="2.2" fill="#fff" stroke="#2d6ef5" stroke-width="1"/><circle cx="506.59" cy="674.29" r="2.2" fill="#fff" stroke="#2d6ef5" stroke-width="1"/><circle cx="514.22" cy="674.88" r="2.2" fill="#fff" stroke="#2d6ef5" stroke-width="1"/><circle cx="521.84" cy="674.48" r="2.2" fill="#fff" stroke="#2d6ef5" stroke-width="1"/><circle cx="529.47" cy="674.88" r="2.2" fill="#fff" stroke="#2d6ef5" stroke-width="1"/><circle cx="537.10" cy="674.88" r="2.2" fill="#fff" stroke="#2d6ef5" stroke-width="1"/><circle cx="544.73" cy="674.88" r="2.2" fill="#fff" stroke="#2d6ef5" stroke-width="1"/><circle cx="552.36" cy="674.88" r="2.2" fill="#fff" stroke="#2d6ef5" stroke-width="1"/><circle cx="559.99" cy="675.11" r="2.2" fill="#fff" stroke="#2d6ef5" stroke-width="1"/><circle cx="567.61" cy="674.88" r="2.2" fill="#fff" stroke="#2d6ef5" stroke-width="1"/><circle cx="575.24" cy="675.50" r="2.2" fill="#fff" stroke="#2d6ef5" stroke-width="1"/><circle cx="582.87" cy="675.50" r="2.2" fill="#fff" stroke="#2d6ef5" stroke-width="1"/><circle cx="590.50" cy="675.50" r="2.2" fill="#fff" stroke="#2d6ef5" stroke-width="1"/><circle cx="598.13" cy="675.50" r="2.2" fill="#fff" stroke="#2d6ef5" stroke-width="1"/><circle cx="605.76" cy="675.50" r="2.2" fill="#fff" stroke="#2d6ef5" stroke-width="1"/><circle cx="613.38" cy="675.50" r="2.2" fill="#fff" stroke="#2d6ef5" stroke-width="1"/><circle cx="621.01" cy="675.50" r="2.2" fill="#fff" stroke="#2d6ef5" stroke-width="1"/><circle cx="628.64" cy="675.50" r="2.2" fill="#fff" stroke="#2d6ef5" stroke-width="1"/><circle cx="636.27" cy="675.50" r="2.2" fill="#fff" stroke="#2d6ef5" stroke-width="1"/><circle cx="643.90" cy="675.50" r="2.2" fill="#fff" stroke="#2d6ef5" stroke-width="1"/><circle cx="651.53" cy="675.50" r="2.2" fill="#fff" stroke="#2d6ef5" stroke-width="1"/><circle cx="659.15" cy="675.50" r="2.2" fill="#fff" stroke="#2d6ef5" stroke-width="1"/><circle cx="666.78" cy="675.50" r="2.2" fill="#fff" stroke="#2d6ef5" stroke-width="1"/><circle cx="674.41" cy="675.50" r="2.2" fill="#fff" stroke="#2d6ef5" stroke-width="1"/><circle cx="682.04" cy="675.50" r="2.2" fill="#fff" stroke="#2d6ef5" stroke-width="1"/><circle cx="689.67" cy="675.50" r="2.2" fill="#fff" stroke="#2d6ef5" stroke-width="1"/><circle cx="697.29" cy="675.50" r="2.2" fill="#fff" stroke="#2d6ef5" stroke-width="1"/><circle cx="704.92" cy="675.50" r="2.2" fill="#fff" stroke="#2d6ef5" stroke-width="1"/><circle cx="712.55" cy="675.50" r="2.2" fill="#fff" stroke="#2d6ef5" stroke-width="1"/><circle cx="720.18" cy="675.50" r="2.2" fill="#fff" stroke="#2d6ef5" stroke-width="1"/><circle cx="727.81" cy="675.50" r="2.2" fill="#fff" stroke="#2d6ef5" stroke-width="1"/><circle cx="735.44" cy="675.50" r="2.2" fill="#fff" stroke="#2d6ef5" stroke-width="1"/><circle cx="743.06" cy="675.50" r="2.2" fill="#fff" stroke="#2d6ef5" stroke-width="1"/><circle cx="750.69" cy="675.50" r="2.2" fill="#fff" stroke="#2d6ef5" stroke-width="1"/><circle cx="758.32" cy="675.50" r="2.2" fill="#fff" stroke="#2d6ef5" stroke-width="1"/><circle cx="765.95" cy="675.50" r="2.2" fill="#fff" stroke="#2d6ef5" stroke-width="1"/><circle cx="773.58" cy="675.50" r="2.2" fill="#fff" stroke="#2d6ef5" stroke-width="1"/><circle cx="781.21" cy="675.50" r="2.2" fill="#fff" stroke="#2d6ef5" stroke-width="1"/><circle cx="788.83" cy="675.50" r="2.2" fill="#fff" stroke="#2d6ef5" stroke-width="1"/><circle cx="796.46" cy="675.50" r="2.2" fill="#fff" stroke="#2d6ef5" stroke-width="1"/><circle cx="804.09" cy="675.50" r="2.2" fill="#fff" stroke="#2d6ef5" stroke-width="1"/><circle cx="811.72" cy="675.50" r="2.2" fill="#fff" stroke="#2d6ef5" stroke-width="1"/><circle cx="819.35" cy="675.50" r="2.2" fill="#fff" stroke="#2d6ef5" stroke-width="1"/><circle cx="826.98" cy="675.50" r="2.2" fill="#fff" stroke="#2d6ef5" stroke-width="1"/><circle cx="834.60" cy="675.50" r="2.2" fill="#fff" stroke="#2d6ef5" stroke-width="1"/><circle cx="842.23" cy="675.50" r="2.2" fill="#fff" stroke="#2d6ef5" stroke-width="1"/><circle cx="849.86" cy="675.50" r="2.2" fill="#fff" stroke="#2d6ef5" stroke-width="1"/><circle cx="857.49" cy="675.50" r="2.2" fill="#fff" stroke="#2d6ef5" stroke-width="1"/><circle cx="865.12" cy="675.50" r="2.2" fill="#fff" stroke="#2d6ef5" stroke-width="1"/><circle cx="872.75" cy="675.50" r="2.2" fill="#fff" stroke="#2d6ef5" stroke-width="1"/><circle cx="880.37" cy="675.50" r="2.2" fill="#fff" stroke="#2d6ef5" stroke-width="1"/><circle cx="888.00" cy="675.50" r="2.2" fill="#fff" stroke="#2d6ef5" stroke-width="1"/><circle cx="895.63" cy="675.50" r="2.2" fill="#fff" stroke="#2d6ef5" stroke-width="1"/><circle cx="903.26" cy="675.50" r="2.2" fill="#fff" stroke="#2d6ef5" stroke-width="1"/><circle cx="910.89" cy="675.50" r="2.2" fill="#fff" stroke="#2d6ef5" stroke-width="1"/><circle cx="918.52" cy="675.50" r="2.2" fill="#fff" stroke="#2d6ef5" stroke-width="1"/><circle cx="926.14" cy="675.50" r="2.2" fill="#fff" stroke="#2d6ef5" stroke-width="1"/><circle cx="933.77" cy="675.50" r="2.2" fill="#fff" stroke="#2d6ef5" stroke-width="1"/><circle cx="941.40" cy="675.50" r="2.2" fill="#fff" stroke="#2d6ef5" stroke-width="1"/></g><g font-family="Liberation Sans" font-size="6.9" fill="#666"><text x="0" y="2.48" text-anchor="end" transform="translate(188.60,684.60) rotate(-45) scale(0.88,1)">0 km/h</text><text x="0" y="2.48" text-anchor="end" transform="translate(203.86,684.60) rotate(-45) scale(0.88,1)">2 km/h</text><text x="0" y="2.48" text-anchor="end" transform="translate(219.11,684.60) rotate(-45) scale(0.88,1)">4 km/h</text><text x="0" y="2.48" text-anchor="end" transform="translate(234.37,684.60) rotate(-45) scale(0.88,1)">6 km/h</text><text x="0" y="2.48" text-anchor="end" transform="translate(249.63,684.60) rotate(-45) scale(0.88,1)">8 km/h</text><text x="0" y="2.48" text-anchor="end" transform="translate(264.88,684.60) rotate(-45) scale(0.88,1)">10 km/h</text><text x="0" y="2.48" text-anchor="end" transform="translate(280.14,684.60) rotate(-45) scale(0.88,1)">12 km/h</text><text x="0" y="2.48" text-anchor="end" transform="translate(295.40,684.60) rotate(-45) scale(0.88,1)">14 km/h</text><text x="0" y="2.48" text-anchor="end" transform="translate(310.65,684.60) rotate(-45) scale(0.88,1)">16 km/h</text><text x="0" y="2.48" text-anchor="end" transform="translate(325.91,684.60) rotate(-45) scale(0.88,1)">18 km/h</text><text x="0" y="2.48" text-anchor="end" transform="translate(341.17,684.60) rotate(-45) scale(0.88,1)">20 km/h</text><text x="0" y="2.48" text-anchor="end" transform="translate(356.42,684.60) rotate(-45) scale(0.88,1)">22 km/h</text><text x="0" y="2.48" text-anchor="end" transform="translate(371.68,684.60) rotate(-45) scale(0.88,1)">24 km/h</text><text x="0" y="2.48" text-anchor="end" transform="translate(386.94,684.60) rotate(-45) scale(0.88,1)">26 km/h</text><text x="0" y="2.48" text-anchor="end" transform="translate(402.19,684.60) rotate(-45) scale(0.88,1)">28 km/h</text><text x="0" y="2.48" text-anchor="end" transform="translate(417.45,684.60) rotate(-45) scale(0.88,1)">30 km/h</text><text x="0" y="2.48" text-anchor="end" transform="translate(432.71,684.60) rotate(-45) scale(0.88,1)">32 km/h</text><text x="0" y="2.48" text-anchor="end" transform="translate(447.96,684.60) rotate(-45) scale(0.88,1)">34 km/h</text><text x="0" y="2.48" text-anchor="end" transform="translate(463.22,684.60) rotate(-45) scale(0.88,1)">36 km/h</text><text x="0" y="2.48" text-anchor="end" transform="translate(478.47,684.60) rotate(-45) scale(0.88,1)">38 km/h</text><text x="0" y="2.48" text-anchor="end" transform="translate(493.73,684.60) rotate(-45) scale(0.88,1)">40 km/h</text><text x="0" y="2.48" text-anchor="end" transform="translate(508.99,684.60) rotate(-45) scale(0.88,1)">42 km/h</text><text x="0" y="2.48" text-anchor="end" transform="translate(524.24,684.60) rotate(-45) scale(0.88,1)">44 km/h</text><text x="0" y="2.48" text-anchor="end" transform="translate(539.50,684.60) rotate(-45) scale(0.88,1)">46 km/h</text><text x="0" y="2.48" text-anchor="end" transform="translate(554.76,684.60) rotate(-45) scale(0.88,1)">48 km/h</text><text x="0" y="2.48" text-anchor="end" transform="translate(570.01,684.60) rotate(-45) scale(0.88,1)">50 km/h</text><text x="0" y="2.48" text-anchor="end" transform="translate(585.27,684.60) rotate(-45) scale(0.88,1)">52 km/h</text><text x="0" y="2.48" text-anchor="end" transform="translate(600.53,684.60) rotate(-45) scale(0.88,1)">54 km/h</text><text x="0" y="2.48" text-anchor="end" transform="translate(615.78,684.60) rotate(-45) scale(0.88,1)">56 km/h</text><text x="0" y="2.48" text-anchor="end" transform="translate(631.04,684.60) rotate(-45) scale(0.88,1)">58 km/h</text><text x="0" y="2.48" text-anchor="end" transform="translate(646.30,684.60) rotate(-45) scale(0.88,1)">60 km/h</text><text x="0" y="2.48" text-anchor="end" transform="translate(661.55,684.60) rotate(-45) scale(0.88,1)">62 km/h</text><text x="0" y="2.48" text-anchor="end" transform="translate(676.81,684.60) rotate(-45) scale(0.88,1)">64 km/h</text><text x="0" y="2.48" text-anchor="end" transform="translate(692.07,684.60) rotate(-45) scale(0.88,1)">66 km/h</text><text x="0" y="2.48" text-anchor="end" transform="translate(707.32,684.60) rotate(-45) scale(0.88,1)">68 km/h</text><text x="0" y="2.48" text-anchor="end" transform="translate(722.58,684.60) rotate(-45) scale(0.88,1)">70 km/h</text><text x="0" y="2.48" text-anchor="end" transform="translate(737.84,684.60) rotate(-45) scale(0.88,1)">72 km/h</text><text x="0" y="2.48" text-anchor="end" transform="translate(753.09,684.60) rotate(-45) scale(0.88,1)">74 km/h</text><text x="0" y="2.48" text-anchor="end" transform="translate(768.35,684.60) rotate(-45) scale(0.88,1)">76 km/h</text><text x="0" y="2.48" text-anchor="end" transform="translate(783.61,684.60) rotate(-45) scale(0.88,1)">78 km/h</text><text x="0" y="2.48" text-anchor="end" transform="translate(798.86,684.60) rotate(-45) scale(0.88,1)">80 km/h</text><text x="0" y="2.48" text-anchor="end" transform="translate(814.12,684.60) rotate(-45) scale(0.88,1)">82 km/h</text><text x="0" y="2.48" text-anchor="end" transform="translate(829.38,684.60) rotate(-45) scale(0.88,1)">84 km/h</text><text x="0" y="2.48" text-anchor="end" transform="translate(844.63,684.60) rotate(-45) scale(0.88,1)">86 km/h</text><text x="0" y="2.48" text-anchor="end" transform="translate(859.89,684.60) rotate(-45) scale(0.88,1)">88 km/h</text><text x="0" y="2.48" text-anchor="end" transform="translate(875.15,684.60) rotate(-45) scale(0.88,1)">90 km/h</text><text x="0" y="2.48" text-anchor="end" transform="translate(890.40,684.60) rotate(-45) scale(0.88,1)">92 km/h</text><text x="0" y="2.48" text-anchor="end" transform="translate(905.66,684.60) rotate(-45) scale(0.88,1)">94 km/h</text><text x="0" y="2.48" text-anchor="end" transform="translate(920.92,684.60) rotate(-45) scale(0.88,1)">96 km/h</text><text x="0" y="2.48" text-anchor="end" transform="translate(936.17,684.60) rotate(-45) scale(0.88,1)">98 km/h</text></g><rect x="522.4" y="709.7" width="20" height="5.8" fill="#2d6ef5" fill-opacity="0.25" stroke="#2d6ef5" stroke-width="1"/><g font-family="Liberation Sans" font-size="6.9" fill="#666"><text transform="translate(546.00,714.38) scale(0.88,1)">Speed 32 km/h</text></g></svg>
<div class="a" style="left:945.9px;top:717.2px;width:20.4px;height:20.4px;border-radius:50%;background:#66769b"></div>
<svg class="a" style="left:952.5px;top:723.5px" width="7" height="7.5" viewBox="0 0 14 15"><path d="M7 14 V2 M2 7 L7 2 L12 7" fill="none" stroke="#fff" stroke-width="2.4" stroke-linecap="round" stroke-linejoin="round"/></svg>
</body></html>
